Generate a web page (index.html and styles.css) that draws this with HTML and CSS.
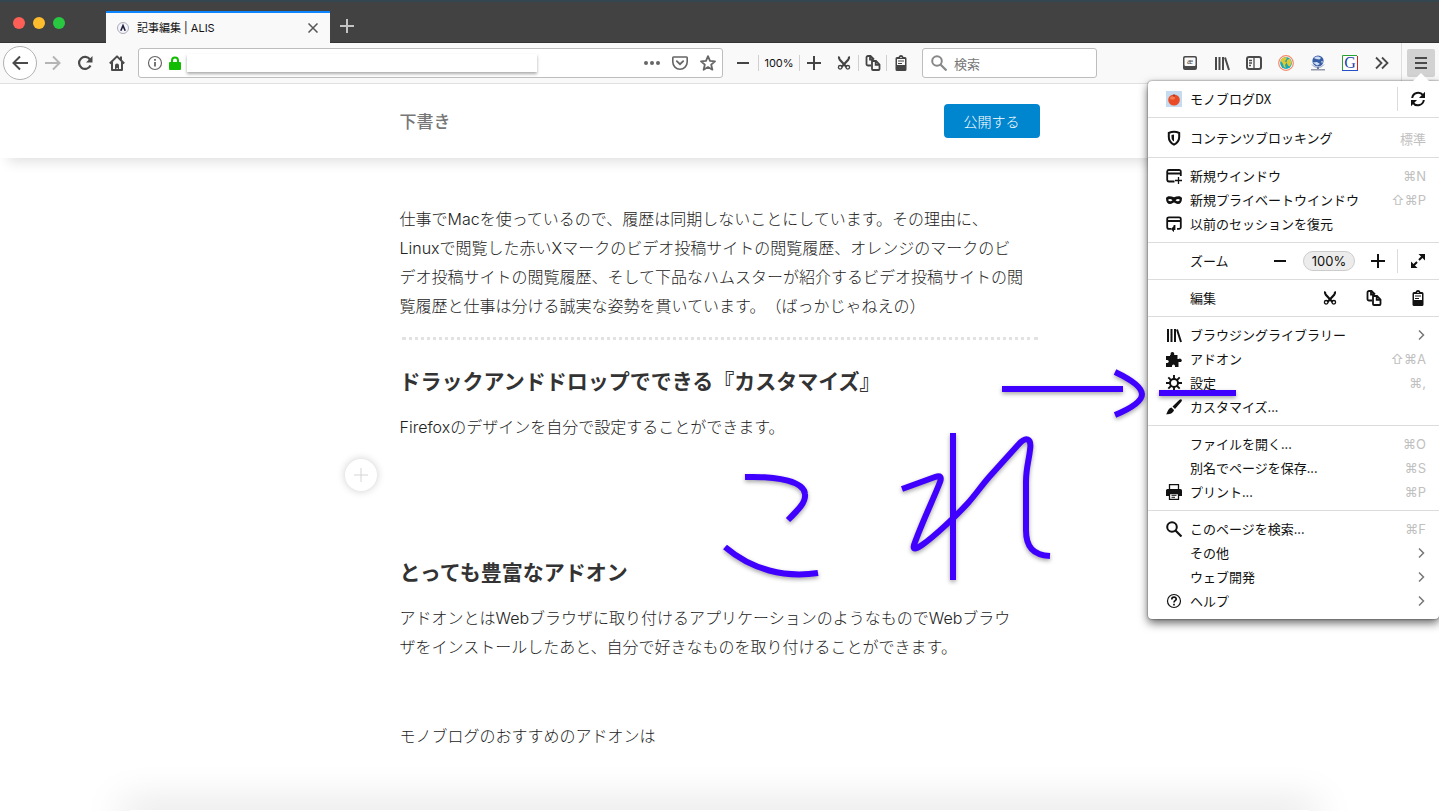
FILE: index.html
```html
<!DOCTYPE html>
<html lang="ja">
<head>
<meta charset="utf-8">
<title>記事編集 | ALIS</title>
<link rel="stylesheet" href="styles.css">
</head>
<body>
<svg class="defs" aria-hidden="true">
  <symbol id="cut" viewBox="0 0 16 16"><path d="M3.200 1.500c-.6 1.300-.2 2.300.6 3.200L10.500 12M12.800 1.500c.6 1.300.2 2.300-.6 3.200L5.500 12" fill="none" stroke="currentColor" stroke-width="2.200"/><circle cx="4.200" cy="12.300" r="1.800" fill="none" stroke="currentColor" stroke-width="1.300"/><circle cx="11.800" cy="12.300" r="1.800" fill="none" stroke="currentColor" stroke-width="1.300"/></symbol>
  <symbol id="copy" viewBox="0 0 16 16"><path d="M6 10.500H3a1.500 1.500 0 0 1-1.500-1.500V2.500A1.500 1.500 0 0 1 3 1h2.500L9 4.500M5 1v3.500h3" fill="none" stroke="currentColor" stroke-width="1.800"/><path d="M7 6h4l3.500 3.500V14a1 1 0 0 1-1 1H8a1 1 0 0 1-1-1zM10.700 6v3.800h3.800" fill="none" stroke="currentColor" stroke-width="1.800"/></symbol>
  <symbol id="paste" viewBox="0 0 16 16"><path fill="currentColor" fill-rule="evenodd" d="M4 2h1.500a2.600 2.600 0 0 1 5 0H12a1.500 1.500 0 0 1 1.500 1.500v11A1.500 1.500 0 0 1 12 16H4a1.500 1.500 0 0 1-1.500-1.500v-11A1.500 1.500 0 0 1 4 2zm0 2v6h8V4zm3.300-2v1h1.400V2z"/><path d="M5 6h6M5 8.500h4" stroke="currentColor" stroke-width="1.200"/></symbol>
  <symbol id="library" viewBox="0 0 16 16"><path d="M2 2v13M5.500 2v13M9 2v13M11 2.500 15 15" fill="none" stroke="currentColor" stroke-width="2"/></symbol>
  <symbol id="search" viewBox="0 0 16 16"><circle cx="6" cy="6" r="4.800" fill="none" stroke="currentColor" stroke-width="2"/><path d="m9.500 9.500 6 6" stroke="currentColor" stroke-width="2.200"/></symbol>
  <symbol id="minus" viewBox="0 0 16 16"><path d="M2 8h12" stroke="currentColor" stroke-width="2"/></symbol>
  <symbol id="plus" viewBox="0 0 16 16"><path d="M1 8h14M8 1v14" stroke="currentColor" stroke-width="2"/></symbol>
  <symbol id="chevron" viewBox="0 0 16 16"><path d="m9 3.500 4.500 4.500L9 12.500" fill="none" stroke="#777" stroke-width="1.500"/></symbol>
</svg>

<header class="browser">
  <div class="tabstrip">
    <div class="lights"><i class="red"></i><i class="yellow"></i><i class="green"></i></div>
    <div class="tab">
      <svg class="favicon" viewBox="0 0 12 12"><circle cx="6" cy="6" r="5.500" fill="#f4f4fa" stroke="#aaabb8"/><path d="M3.800 8.800 6 3.600l2.200 5.200" fill="none" stroke="#20203e" stroke-width="1.600"/></svg>
      <span class="tab-title">記事編集 | ALIS</span>
      <button class="tab-close" aria-label="タブを閉じる"><svg viewBox="0 0 10 10"><path d="m.5.5 9 9m0-9-9 9" stroke="#555" stroke-width="1.500"/></svg></button>
    </div>
    <button class="new-tab" aria-label="新しいタブ"><svg viewBox="0 0 14 14"><path d="M0 7h14M7 0v14" stroke="#c4c4c4" stroke-width="2"/></svg></button>
  </div>
  <nav class="toolbar">
    <button class="back" aria-label="戻る"><svg class="ic" viewBox="0 0 16 16"><path d="M16 8H1.500M8 1.500 1.500 8 8 14.500" fill="none" stroke="currentColor" stroke-width="2"/></svg></button>
    <button class="tool disabled" aria-label="進む"><svg class="ic" viewBox="0 0 16 16"><path d="M0 8h14.500M8 1.500 14.500 8 8 14.500" fill="none" stroke="currentColor" stroke-width="2"/></svg></button>
    <button class="tool" aria-label="再読み込み"><svg class="ic" viewBox="0 0 16 16"><path d="M13.500 10.500A6 6 0 1 1 13 4.500" fill="none" stroke="currentColor" stroke-width="2.200"/><path d="M15.500 1v6.500H9z" fill="currentColor"/></svg></button>
    <button class="tool" aria-label="ホーム"><svg class="ic" viewBox="0 0 16 16"><path d="M.8 8.500 8 1.400l7.200 7.100M3 7v8h10V7" fill="none" stroke="currentColor" stroke-width="2" stroke-linejoin="round"/><path d="M6 15v-4.500a2 2 0 0 1 4 0V15h-1.200v-2H7.500v2z" fill="currentColor"/><path d="M11 1.500h2v4h-2z" fill="currentColor"/></svg></button>
    <div class="urlbar">
      <svg class="ic" viewBox="0 0 16 16"><circle cx="8" cy="8" r="6.500" fill="none" stroke="#666" stroke-width="1.200"/><path d="M8 7v4.500M8 4v1.700" stroke="#666" stroke-width="1.800"/></svg>
      <svg class="lock" viewBox="0 0 12 14"><path d="M3 7V4.500a3 3 0 0 1 6 0V7" fill="none" stroke="#12bc00" stroke-width="2"/><rect y="6" width="12" height="8" rx="1" fill="#12bc00"/></svg>
      <input class="url" type="text" aria-label="アドレス">
      <button class="urlbtn" aria-label="ページ操作"><svg class="ic" viewBox="0 0 16 16" fill="currentColor"><circle cx="2" cy="8" r="2"/><circle cx="8" cy="8" r="2"/><circle cx="14" cy="8" r="2"/></svg></button>
      <button class="urlbtn" aria-label="Pocket"><svg class="ic" viewBox="0 0 16 16"><path d="M1.500 2h13a.7.700 0 0 1 .7.700V7a7.200 7.200 0 0 1-14.400 0V2.700a.7.700 0 0 1 .7-.700z" fill="none" stroke="currentColor" stroke-width="1.600"/><path d="m4.800 6.200 3.200 3 3.200-3" fill="none" stroke="currentColor" stroke-width="1.800" stroke-linecap="round"/></svg></button>
      <button class="urlbtn" aria-label="ブックマーク"><svg class="ic" viewBox="0 0 16 16"><path d="m8 1.200 2 4.600 5 .5-3.800 3.400 1.200 5L8 12.100l-4.400 2.600 1.200-5L1 6.300l5-.5z" fill="none" stroke="currentColor" stroke-width="1.800" stroke-linejoin="round"/></svg></button>
    </div>
    <div class="group">
      <button class="zoom-out" aria-label="縮小"><svg class="ic"><use href="#minus"/></svg></button>
      <button class="zoom-level">100%</button>
      <button aria-label="拡大"><svg class="ic"><use href="#plus"/></svg></button>
    </div>
    <div class="group edit">
      <button aria-label="切り取り"><svg class="ic"><use href="#cut"/></svg></button>
      <button aria-label="コピー"><svg class="ic"><use href="#copy"/></svg></button>
      <button aria-label="貼り付け"><svg class="ic"><use href="#paste"/></svg></button>
    </div>
    <label class="searchbar"><svg class="ic"><use href="#search"/></svg><input type="text" placeholder="検索" aria-label="検索"></label>
    <div class="extensions">
      <button class="tool" aria-label="辞書"><svg class="ic" viewBox="0 0 16 16"><rect x="1" y="1" width="14" height="14" rx="2" fill="currentColor"/><rect x="2.500" y="2.500" width="11" height="8.500" rx="1" fill="#f9f9fa"/><text x="8" y="9" class="ae">æ</text></svg></button>
      <button class="tool" aria-label="ライブラリー"><svg class="ic"><use href="#library"/></svg></button>
      <button class="tool" aria-label="サイドバー"><svg class="ic" viewBox="0 0 16 16"><rect x="1" y="2" width="14" height="12" rx="2" fill="none" stroke="currentColor" stroke-width="2"/><path d="M8 2v12M3 5.500h3M3 8h3M3 10.500h2" stroke="currentColor" stroke-width="1.300"/></svg></button>
      <button class="tool" aria-label="地球"><svg class="ic" viewBox="0 0 16 16"><circle cx="8" cy="8" r="7.300" fill="#fff" stroke="#f58868" stroke-width="1.200"/><circle cx="8" cy="8" r="5.900" fill="#18a9b8"/><path d="M2.500 6C4 2.500 7 1.800 9 2.500L8 5 6.500 6l2 1.500L7 10l1 3-2-1-1.500-4zM9 5l3-1.500 1.500 4-1.500 4-2-1-1.500-3z" fill="#e2c72e"/></svg></button>
      <button class="tool" aria-label="グローブ"><svg class="ic" viewBox="0 0 16 16"><circle cx="8" cy="6" r="5.600" fill="#365ca3"/><path d="M4 3c2-2 5-2 7 0L9.500 4.500 6 4zM2.800 7.500 7 7l3 2-3 1.500zM11 6l2 .5-1 2z" fill="#cfdcf4"/><path d="M2 9.500c3 4 9 4 12 0" fill="none" stroke="#8a9cc4"/><path d="M8 12v2" stroke="#68789a" stroke-width="2"/><path d="M1 14.800h14" stroke="#7a8194" stroke-width="1.200"/></svg></button>
      <button class="tool" aria-label="Google"><svg class="ic" viewBox="0 0 16 16"><path fill="#fff" d="M0 0h16v16H0z"/><path d="M.5 15V.5H15" fill="none" stroke="#27a22e"/><path d="M15.500 1v14" stroke="#db2118"/><path d="M0 15.500h16" stroke="#2450c8"/><text x="8" y="13" class="gletter">G</text></svg></button>
      <button class="tool" aria-label="その他のツール"><svg class="ic" viewBox="0 0 16 16"><path d="m2 2.500 5.500 5.500L2 13.500M8 2.500 13.500 8 8 13.500" fill="none" stroke="currentColor" stroke-width="1.800"/></svg></button>
    </div>
    <div class="menu-holder"><button class="menu-button" aria-label="メニュー"><svg class="ic" viewBox="0 0 16 16"><path d="M2 3h12M2 8h12M2 13h12" stroke="currentColor" stroke-width="2"/></svg></button></div>
  </nav>
</header>

<div class="page">
  <header class="editor-head"><div class="column head-row"><strong class="draft">下書き</strong><button class="publish">公開する</button></div></header>
  <main class="column article">
    <p>仕事でMacを使っているので、履歴は同期しないことにしています。その理由に、<br>Linuxで閲覧した赤いXマークのビデオ投稿サイトの閲覧履歴、オレンジのマークのビ<br>デオ投稿サイトの閲覧履歴、そして下品なハムスターが紹介するビデオ投稿サイトの閲<br>覧履歴と仕事は分ける誠実な姿勢を貫いています。（ばっかじゃねえの）</p>
    <hr>
    <h2>ドラックアンドドロップでできる『カスタマイズ』</h2>
    <p>Firefoxのデザインを自分で設定することができます。</p>
    <button class="add" aria-label="ブロックを追加"><svg viewBox="0 0 14 14"><path d="M0 7h14M7 0v14" stroke="#d4d4d4"/></svg></button>
    <h2 class="second">とっても豊富なアドオン</h2>
    <p>アドオンとはWebブラウザに取り付けるアプリケーションのようなものでWebブラウ<br>ザをインストールしたあと、自分で好きなものを取り付けることができます。</p>
    <p class="last">モノブログのおすすめのアドオンは</p>
  </main>
  <div class="page-edge"></div>
</div>

<aside class="menu" aria-label="アプリケーションメニュー">
  <section class="split">
    <button class="item"><svg class="ic" viewBox="0 0 16 16"><path d="M0 0h16v16H0z" fill="#c5dbef"/><ellipse cx="8" cy="9" rx="5.800" ry="5.500" fill="#e84b26"/><ellipse cx="6.500" cy="7" rx="2.700" ry="1.700" fill="#f47c4f"/><path d="M8 5.500V3.500" stroke="#6a3420"/></svg><span>モノブログDX</span></button>
    <button class="side" aria-label="同期"><svg class="ic" viewBox="0 0 16 16"><path d="M2.200 7A6 6 0 0 1 13 4.200M13.800 9A6 6 0 0 1 3 11.800" fill="none" stroke="currentColor" stroke-width="2"/><path d="M15 .8V7H9zM1 15.200V9h6z" fill="currentColor"/></svg></button>
  </section>
  <section class="blocking"><button class="item"><svg class="ic" viewBox="0 0 16 16"><path d="M8 1.800c2 0 3.700.5 5.200 1.200V7c0 3.600-2 6-5.200 7.600C4.800 13 2.800 10.600 2.800 7V3C4.300 2.300 6 1.800 8 1.800z" fill="none" stroke="currentColor" stroke-width="2"/><path d="M8 4.500v7C6.300 10.500 5.500 9 5.500 7V5z" fill="currentColor"/></svg><span>コンテンツブロッキング</span><kbd>標準</kbd></button></section>
  <section>
    <button class="item"><svg class="ic" viewBox="0 0 16 16"><path d="M8.500 13.500H3A1.800 1.800 0 0 1 1.200 12V3.500A1.700 1.700 0 0 1 3 2h10a1.700 1.700 0 0 1 1.800 1.700V8M1 5.500h14" fill="none" stroke="currentColor" stroke-width="1.800"/><path d="M12.500 9v7M9 12.500h7" stroke="currentColor" stroke-width="1.300"/></svg><span>新規ウインドウ</span><kbd>⌘N</kbd></button>
    <button class="item"><svg class="ic" viewBox="0 0 16 16"><path fill="currentColor" fill-rule="evenodd" d="M0 6c1.300-2.600 5-2 8-.7 3-1.300 6.700-1.900 8 .7 0 4-1.500 6-4 6-2.200 0-2.800-1.500-4-1.500S6.200 12 4 12C1.500 12 0 10 0 6zm2 2c1.300 1.700 3.400 1.600 4.400.2C5 6.500 3 6.500 2 8zm7.600.2c1 1.400 3.100 1.500 4.400-.2-1-1.500-3-1.500-4.400.2z"/></svg><span>新規プライベートウインドウ</span><kbd>⇧⌘P</kbd></button>
    <button class="item"><svg class="ic" viewBox="0 0 16 16"><path d="M5 12.800H3a1.800 1.800 0 0 1-1.800-1.700V3A1.700 1.700 0 0 1 3 1.300h10A1.700 1.700 0 0 1 14.800 3v8.200A1.700 1.700 0 0 1 13 12.800h-2M1 5h14M8.500 9v4H7" fill="none" stroke="currentColor" stroke-width="1.800"/><path d="M8 10v6.200L4.800 13z" fill="currentColor"/></svg><span>以前のセッションを復元</span></button>
  </section>
  <section class="split">
    <div class="item"><i class="ic"></i><span>ズーム</span><div class="zoom-set"><button aria-label="縮小"><svg class="ic"><use href="#minus"/></svg></button><button class="pill">100%</button><button aria-label="拡大"><svg class="ic"><use href="#plus"/></svg></button></div></div>
    <button class="side" aria-label="全画面"><svg class="ic" viewBox="0 0 16 16"><path d="M9 7l5-5M7 9l-5 5" stroke="currentColor" stroke-width="2"/><path d="M8.500 1H15v6.500zM1 8.500 7.500 15H1z" fill="currentColor"/></svg></button>
  </section>
  <section><div class="item"><i class="ic"></i><span>編集</span><div class="edit-set"><button aria-label="切り取り"><svg class="ic"><use href="#cut"/></svg></button><button aria-label="コピー"><svg class="ic"><use href="#copy"/></svg></button><button aria-label="貼り付け"><svg class="ic"><use href="#paste"/></svg></button></div></div></section>
  <section>
    <button class="item"><svg class="ic"><use href="#library"/></svg><span>ブラウジングライブラリー</span><svg class="ic arrow"><use href="#chevron"/></svg></button>
    <button class="item"><svg class="ic" viewBox="0 0 16 16"><path fill="currentColor" d="M4 5V4h.8A2 2 0 0 1 4.500 3 1.900 1.900 0 0 1 8.300 3c0 .5-.2.700-.3 1h3.500v4h1A1.800 1.800 0 1 1 15 11h-2.500v5H9v-1a1.500 1.500 0 0 0-3 0v1H0v-4h1.200c2 0 2-3 0-3H0V5z"/></svg><span>アドオン</span><kbd>⇧⌘A</kbd></button>
    <button class="item"><svg class="ic" viewBox="0 0 16 16"><circle cx="8" cy="8" r="4" fill="none" stroke="currentColor" stroke-width="2"/><path d="M8 0v4M8 12v4M0 8h4M12 8h4M2.300 2.300l3 3M10.700 10.700l3 3M13.700 2.300l-3 3M5.300 10.700l-3 3" stroke="currentColor" stroke-width="1.900"/></svg><span>設定</span><kbd>⌘,</kbd></button>
    <button class="item"><svg class="ic" viewBox="0 0 16 16"><path fill="currentColor" d="M15.500.5c.8.700.3 1.500 0 2L9 10 6.500 7.500 13.500.8c.6-.5 1.400-.8 2-.3zM5.500 8.500 8 11c-.5 3-4 4.500-8 4.300C1.700 14 1.500 9.500 5.500 8.500z"/></svg><span>カスタマイズ...</span></button>
  </section>
  <section>
    <button class="item"><i class="ic"></i><span>ファイルを開く...</span><kbd>⌘O</kbd></button>
    <button class="item"><i class="ic"></i><span>別名でページを保存...</span><kbd>⌘S</kbd></button>
    <button class="item"><svg class="ic" viewBox="0 0 16 16"><path d="M3.500 6V.7h9V6" fill="none" stroke="currentColor" stroke-width="1.300"/><path d="M1.500 5h13A1.500 1.500 0 0 1 16 6.500V12H0V6.500A1.500 1.500 0 0 1 1.500 5z" fill="currentColor"/><path d="M3.500 9.500v5.800h9V9.500z" fill="#fff" stroke="currentColor" stroke-width="1.300"/><path d="M5.500 11.300h5M5.500 13.300h3.500" stroke="currentColor"/></svg><span>プリント...</span><kbd>⌘P</kbd></button>
  </section>
  <section>
    <button class="item"><svg class="ic"><use href="#search"/></svg><span>このページを検索...</span><kbd>⌘F</kbd></button>
    <button class="item"><i class="ic"></i><span>その他</span><svg class="ic arrow"><use href="#chevron"/></svg></button>
    <button class="item"><i class="ic"></i><span>ウェブ開発</span><svg class="ic arrow"><use href="#chevron"/></svg></button>
    <button class="item"><svg class="ic" viewBox="0 0 16 16"><circle cx="8" cy="8" r="6.500" fill="none" stroke="currentColor" stroke-width="1.200"/><path d="M5.800 6.500C5.800 3.300 10.300 3.600 10.200 6.200 10.100 7.700 8 7.700 8 9.500M8 10.800v1.700" fill="none" stroke="currentColor" stroke-width="1.700"/></svg><span>ヘルプ</span><svg class="ic arrow"><use href="#chevron"/></svg></button>
  </section>
</aside>

<svg class="ink" viewBox="0 0 1439 811" aria-hidden="true">
  <path d="M1002 389h121M1115 372C1151 389 1151 400 1115 415M1159 393h77"/>
  <path d="M745 477C780 476 804 482 805 494C806 502 799 509 788 520M725 547C752 570 785 578 818 573"/>
  <path d="M953 433v147M902 489 935 477Q943 474 940 482C934 498 922 522 914 545Q912 552 922 545C935 536 957 515 968 503C976 494 982 485 990 476L1018 445C1026 436 1032 438 1030 450C1029 460 1026 468 1026 482V530C1026 547 1033 555 1050 556"/>
</svg>
</body>
</html>
```

FILE: styles.css
```css
* { box-sizing: border-box; }
body { margin: 0; min-height: 100vh; position: relative; display: flex; flex-direction: column; overflow: hidden; background: #fff; color: #111; font-family: "Noto Sans CJK JP", "Liberation Sans", sans-serif; font-size: 13px; text-spacing-trim: space-all; }
button { display: flex; align-items: center; justify-content: center; padding: 0; border: 0; background: none; color: inherit; font: inherit; }
input { border: 0; padding: 0; outline: 0; background: none; font: inherit; }
p, h2, hr { margin: 0; }
.defs { display: none; }
.ic { width: 16px; height: 16px; flex: none; display: block; }

.tabstrip { height: 43px; display: flex; align-items: flex-end; background: #424242; border-top: 2px solid #344650; border-bottom: 1px solid #333; }
.lights { display: flex; gap: 8px; align-self: center; width: 106px; padding: 2px 0 0 13px; }
.lights i { width: 12px; height: 12px; border-radius: 50%; }
.red { background: #ff5f57; }
.yellow { background: #ffbd2e; }
.green { background: #28c940; }
.tab { width: 224px; height: 32px; margin-bottom: -1px; display: flex; align-items: center; padding: 0 12px 0 11px; background: #f9f9fa; border-top: 2px solid #0a84ff; }
.favicon { width: 12px; height: 12px; }
.tab-title { flex: 1; margin-left: 8px; padding-bottom: 2px; font-size: 11px; font-family: Inter, "Noto Sans CJK JP", sans-serif; }
.tab-close svg { width: 10px; height: 10px; }
.new-tab { width: 34px; height: 32px; }
.new-tab svg { width: 14px; height: 14px; }

.toolbar { height: 41px; display: flex; align-items: center; padding: 0 4px 0 3px; background: #f9f9fa; border-bottom: 1px solid #e0e0e1; color: #4a4a4a; }
.back { width: 34px; height: 34px; border: 1px solid #b1b1b1; border-radius: 50%; background: #fff; }
.tool { width: 32px; height: 28px; }
.disabled { color: #b5b5b5; }
.urlbar, .searchbar { display: flex; align-items: center; height: 30px; background: #fff; border: 1px solid #bdbdbd; border-radius: 3px; }
.urlbar { flex: 1; min-width: 0; margin: 0 5px; padding-left: 8px; color: #666; }
.lock { width: 12px; height: 14px; margin: 0 6px; }
.url { width: 350px; min-width: 0; height: 18px; margin-right: auto; background: #fff; box-shadow: 0 2px 3px #aaa; }
.urlbtn { width: 28px; height: 28px; }
.group { display: flex; color: #444; }
.group button { width: 28px; height: 16px; }
.group button + button { border-left: 1px solid #d0d0d0; }
.group .zoom-out { width: 30px; }
.group .zoom-level { width: 41px; font-size: 11px; font-family: Inter, sans-serif; color: #111; }
.edit { margin: 0 8px 0 3px; }
.searchbar { width: 175px; padding: 0 8px; gap: 7px; color: #888; }
.searchbar input { flex: 1; min-width: 0; }
.searchbar input::placeholder { color: #777; }
.extensions { display: flex; margin: 0 3px 0 77px; }
.ae { font: 9px "Liberation Serif", serif; text-anchor: middle; fill: #4a4a4a; }
.gletter { font: 16px "Liberation Serif", serif; text-anchor: middle; fill: #2344a8; }
.menu-holder { height: 40px; display: flex; align-items: center; padding-left: 5px; border-left: 1px solid #ddd; }
.menu-button { width: 28px; height: 28px; border-radius: 2px; background: #d2d2d3; }

.page { flex: 1; display: flex; flex-direction: column; }
.column { width: 640px; max-width: 100%; margin: 0 auto; }
.editor-head { height: 74px; display: flex; background: #fff; box-shadow: 0 12px 12px -8px rgba(0,0,0,.12); }
.head-row { display: flex; align-items: center; justify-content: space-between; }
.draft { padding-bottom: 2px; font-size: 17px; font-weight: 500; color: #777; }
.publish { width: 96px; height: 34px; border-radius: 4px; background: #0086cf; color: #fff; font-size: 14px; font-weight: 300; }
.article { flex: 1; padding-top: 47px; color: #222; font-size: 16px; font-weight: 300; font-family: Inter, "Noto Sans CJK JP", sans-serif; line-height: 29px; white-space: nowrap; }
.article hr { margin: 16px 2px 26px; border: 0; border-top: 3px dotted #e2e2e2; }
.article h2 { margin-bottom: 15px; font-size: 21px; line-height: 32px; font-weight: 700; color: #333; }
.add { width: 32px; height: 32px; margin: 17px 0 0 -55px; border-radius: 50%; background: #fff; box-shadow: 0 0 8px rgba(0,0,0,.2); }
.add svg { width: 14px; height: 14px; }
.article .second { margin-top: 66px; }
.last { margin-top: 60px; }
.page-edge { height: 1px; margin: 0 130px; box-shadow: 0 4px 40px 8px rgba(0,0,0,.18); }

.menu { position: absolute; top: 81px; right: 0; width: 291px; background: #fff; border-radius: 4px 0 4px 4px; box-shadow: 0 4px 10px rgba(0,0,0,.6), 0 0 2px rgba(0,0,0,.6); }
.menu::before { content: ""; position: absolute; top: -8px; right: 10px; border: 8px solid transparent; border-top: 0; border-bottom-color: #fff; }
.menu section { padding: 6px 0; border-bottom: 1px solid #dcdcdc; }
.menu section:last-child { border-bottom: 0; }
.menu .split { display: flex; }
.menu .blocking { padding: 8px 0 7px; }
.item { width: 100%; height: 24px; display: flex; align-items: center; justify-content: flex-start; gap: 8px; padding: 0 13px 0 18px; white-space: nowrap; }
.item > span { padding-bottom: 2px; }
.split .item { flex: 1; width: auto; }
.side { width: 42px; height: 24px; padding-right: 2px; border-left: 1px solid #dcdcdc; }
.item kbd { margin-left: auto; color: #c0c0c0; font: 13px Inter, "Noto Sans CJK JP", sans-serif; }
.arrow { margin-left: auto; }
.zoom-set { display: flex; align-items: center; gap: 15px; margin: 0 -2px 0 auto; }
.pill { width: 52px; height: 20px; border: 1px solid #ccc; border-radius: 10px; background: #ececec; font-family: Inter, sans-serif; }
.edit-set { display: flex; gap: 28px; margin-left: auto; }

.ink { position: absolute; top: 0; left: 0; width: 1439px; height: 811px; pointer-events: none; fill: none; stroke: #4000ff; stroke-width: 6px; filter: drop-shadow(0 2px 2px rgba(0,0,0,.35)); }
```
